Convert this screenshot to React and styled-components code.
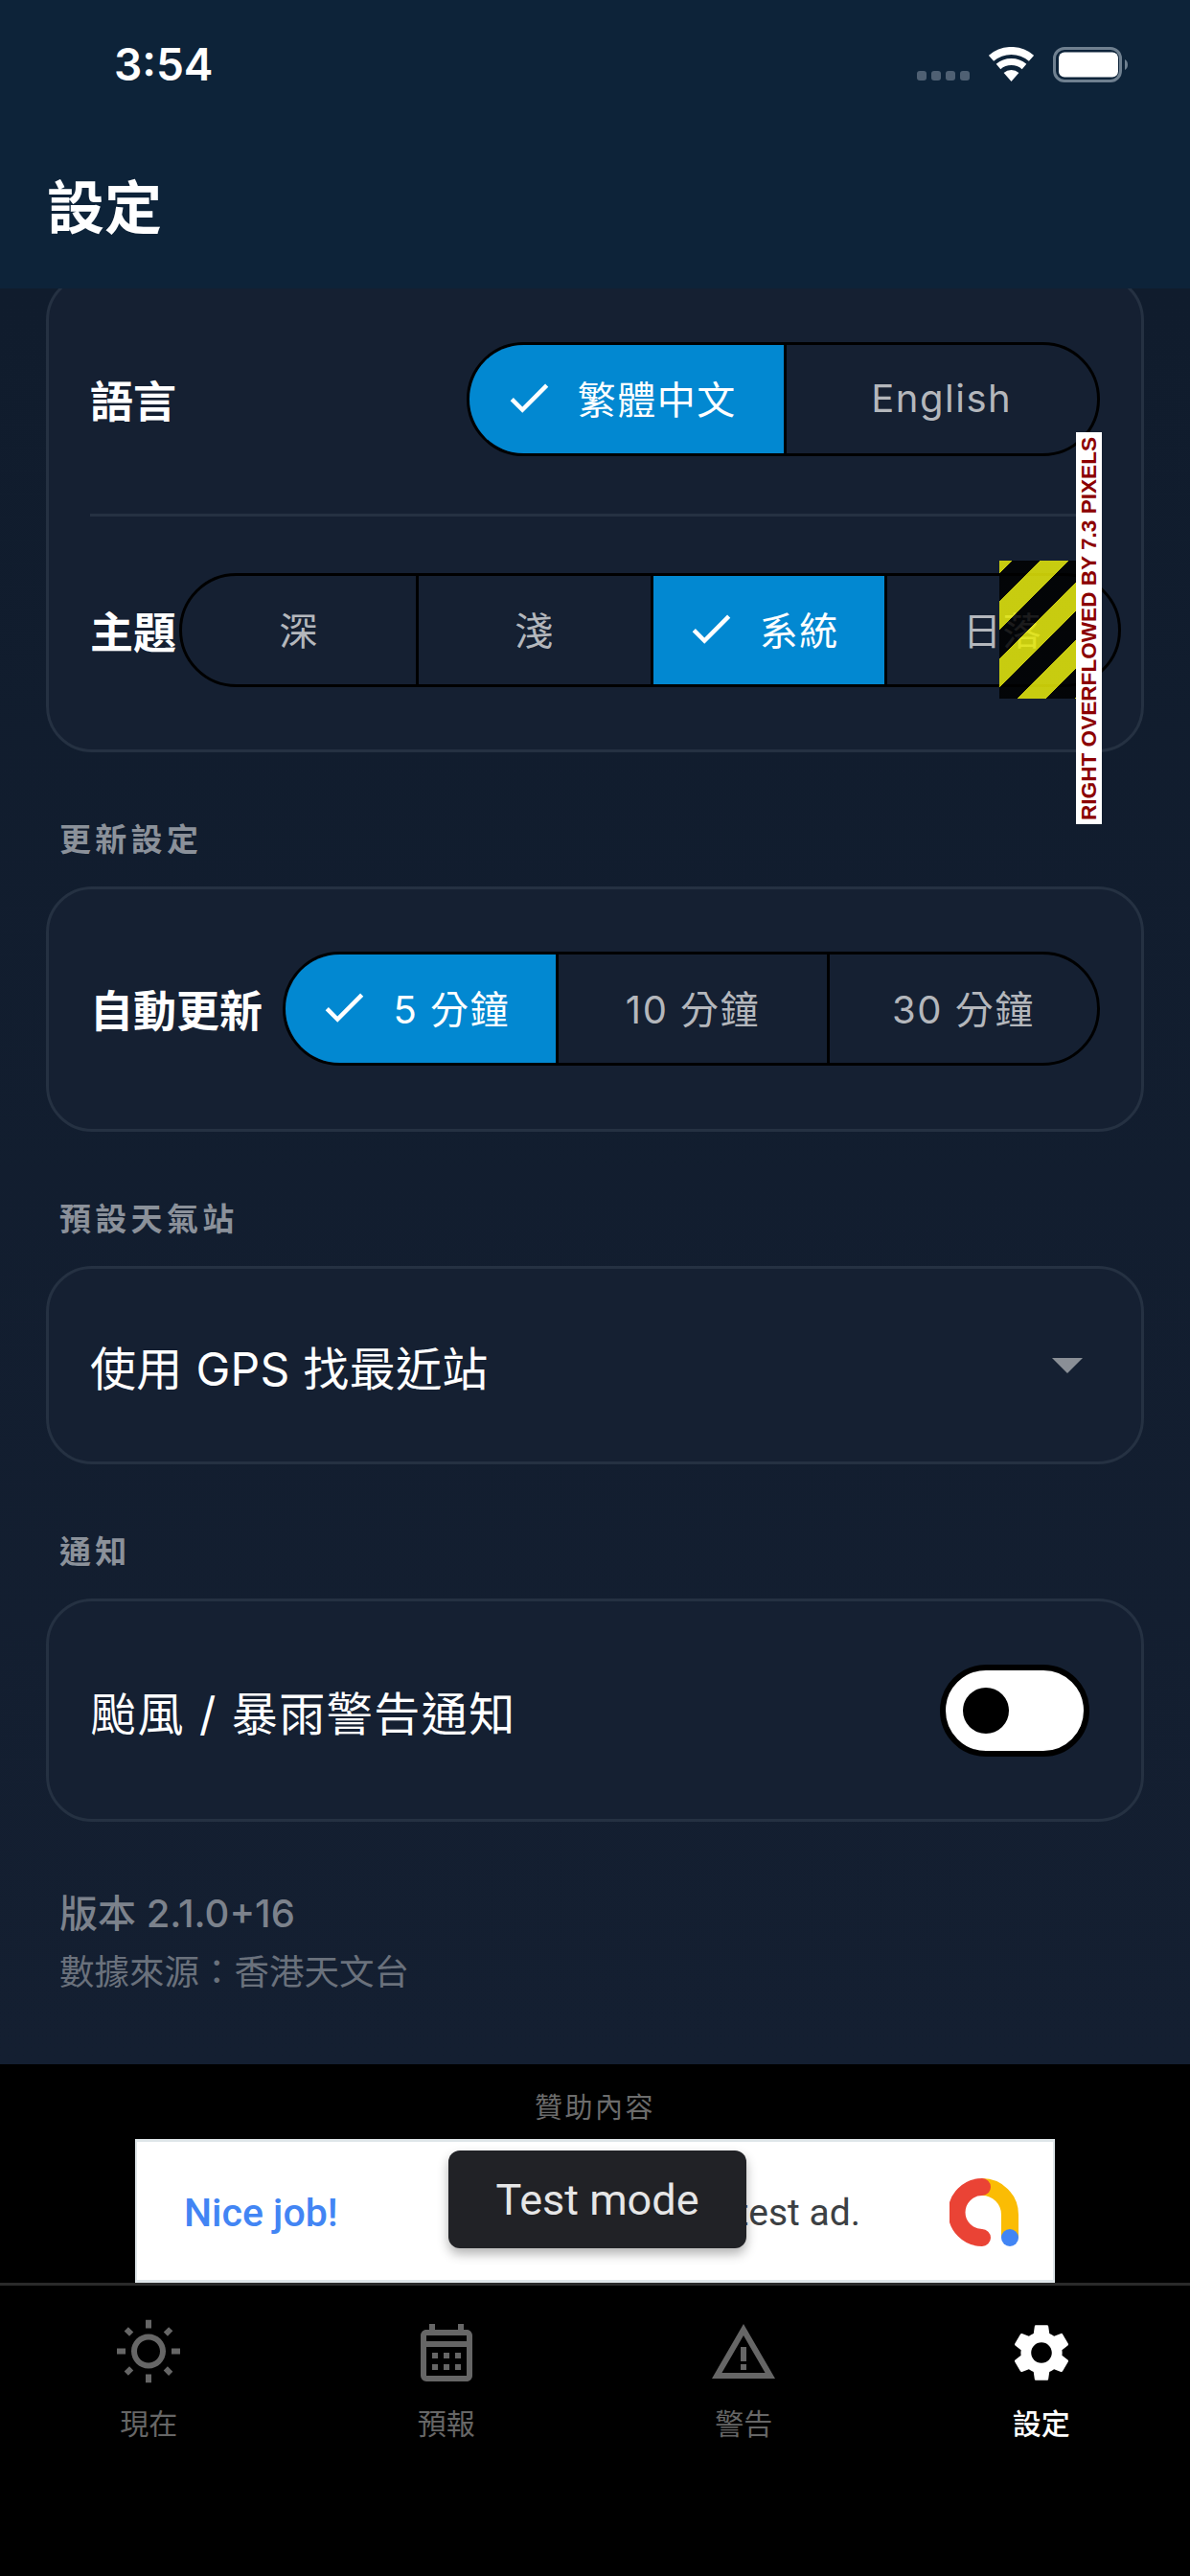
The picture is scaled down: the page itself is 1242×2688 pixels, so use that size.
import React from 'react'
import styled, { createGlobalStyle } from 'styled-components'
import { MdCheck, MdOutlineWbSunny, MdOutlineCalendarMonth, MdWarningAmber, MdSettings } from 'react-icons/md'

const FONT = `Inter, "Noto Sans CJK TC", sans-serif`

const Global = createGlobalStyle`
  html, body { margin: 0; padding: 0; background: #000; }
  * { box-sizing: border-box; }
`

const Screen = styled.div`
  width: 1242px;
  height: 2688px;
  display: flex;
  flex-direction: column;
  overflow: hidden;
  font-family: ${FONT};
  background: #000;
`

const Header = styled.header`
  height: 301px;
  flex-shrink: 0;
  background: #0d2339;
  position: relative;
  z-index: 2;
  color: #fff;
`

const StatusBar = styled.div`
  height: 188px;
  padding: 41px 64px 0 119px;
  display: flex;
  justify-content: space-between;
  align-items: flex-start;
`

const Time = styled.div`
  font-size: 46px;
  line-height: 52px;
  font-weight: 600;
`

const StatusIcons = styled.div`
  display: flex;
  align-items: flex-end;
  gap: 20px;
  padding-top: 8px;
`

const Title = styled.h1`
  margin: -13px 0 0 49px;
  font-size: 60px;
  line-height: 84px;
  font-weight: 700;
`

const Main = styled.main`
  height: 1853px;
  flex-shrink: 0;
  overflow: hidden;
  padding: 0 48px;
  background: linear-gradient(180deg, #101c2d 0%, #141f31 100%);
`

const Card = styled.section`
  background: #152032;
  border: 3px solid #253142;
  border-radius: 48px;
  padding: ${({ $pad }) => $pad || '0 43px'};
  margin-top: ${({ $top }) => $top || 0};
  height: ${({ $height }) => $height};
`

const Row = styled.div`
  position: relative;
  display: flex;
  align-items: center;
  justify-content: space-between;
  height: ${({ $height }) => $height || '119px'};
`

const RowLabel = styled.div`
  flex-shrink: 0;
  padding-right: 3px;
  color: #fff;
  font-size: 45px;
  font-weight: 700;
  white-space: nowrap;
`

const Divider = styled.div`
  height: 3px;
  margin: 60px 0 59px;
  background: #253142;
`

const Segments = styled.div`
  flex-shrink: 0;
  display: grid;
  grid-auto-flow: column;
  grid-auto-columns: 1fr;
  width: ${({ $width }) => $width};
  height: 119px;
  border: 3px solid #000;
  border-radius: 60px;
  overflow: hidden;
`

const Segment = styled.div`
  min-width: 0;
  display: flex;
  align-items: center;
  justify-content: center;
  gap: 24px;
  padding: 0 ${({ $active }) => ($active ? '14px' : '0')} 3px 0;
  font-size: 40px;
  letter-spacing: 1.5px;
  white-space: nowrap;
  color: ${({ $active }) => ($active ? '#fff' : '#b4b7bc')};
  background: ${({ $active }) => ($active ? '#0288d1' : 'transparent')};
  & + & { border-left: 3px solid #000; }
`

const SectionLabel = styled.h2`
  margin: 75px 0 33px 14px;
  font-size: 33px;
  line-height: 32px;
  font-weight: 700;
  letter-spacing: 4.3px;
  color: #8b919a;
`

const SelectText = styled.div`
  color: #fff;
  font-size: 48px;
  letter-spacing: ${({ $spacing }) => $spacing};
`

const Caret = styled.div`
  width: 0;
  height: 0;
  margin-right: 18px;
  border-left: 16px solid transparent;
  border-right: 16px solid transparent;
  border-top: 16px solid #8a8f96;
`

const Toggle = styled.div`
  width: 156px;
  height: 96px;
  margin-right: 11px;
  padding-left: 18px;
  display: flex;
  align-items: center;
  background: #fff;
  border: 6px solid #000;
  border-radius: 48px;
`

const Knob = styled.div`
  width: 48px;
  height: 48px;
  border-radius: 50%;
  background: #000;
`

const Footer = styled.div`
  margin: 74px 0 0 14px;
  color: #7c828c;
`

const Version = styled.div`
  font-size: 40px;
  line-height: 44px;
  font-weight: 500;
`

const Source = styled.div`
  margin-top: 17px;
  font-size: 36.5px;
  line-height: 44px;
  color: #6a717c;
`

const AdArea = styled.div`
  height: 228px;
  flex-shrink: 0;
  background: #000;
  display: flex;
  flex-direction: column;
  align-items: center;
`

const AdLabel = styled.div`
  height: 78px;
  padding-top: 30px;
  font-size: 29px;
  line-height: 32px;
  letter-spacing: 2.5px;
  color: #6c6c6c;
`

const Banner = styled.div`
  position: relative;
  width: 960px;
  height: 150px;
  padding: 0 36px 0 49px;
  display: flex;
  align-items: center;
  background: #fff;
  border: 2px solid #dfe6e9;
  border-top-width: 3px;
  border-bottom-width: 3px;
  font-family: Roboto, sans-serif;
`

const AdHead = styled.div`
  margin-top: 4px;
  color: #4285f4;
  font-size: 41px;
  font-weight: 500;
`

const AdText = styled.div`
  margin: 4px 93px 0 auto;
  color: #3c4043;
  font-size: 39px;
`

const Toast = styled.div`
  position: absolute;
  left: 325px;
  top: 9px;
  width: 311px;
  height: 102px;
  display: flex;
  align-items: center;
  justify-content: center;
  border-radius: 12px;
  background: #212226;
  box-shadow: 0 6px 12px rgba(0, 0, 0, 0.3);
  color: #e6e6e6;
  font-size: 45px;
`

const Nav = styled.nav`
  flex: 1;
  display: grid;
  grid-template-columns: repeat(4, 1fr);
  align-content: start;
  padding-top: 34px;
  background: #000;
  border-top: 3px solid #2a2a2a;
`

const Tab = styled.div`
  display: flex;
  flex-direction: column;
  align-items: center;
  gap: 21px;
  color: ${({ $active }) => ($active ? '#fff' : '#666')};
  font-size: 30px;
  line-height: 34px;
  font-weight: ${({ $active }) => ($active ? 500 : 400)};
`

const Stripes = styled.div`
  position: absolute;
  right: 25px;
  top: -13px;
  width: 80px;
  height: 144px;
  background: repeating-linear-gradient(
    135deg,
    rgba(231, 234, 10, 0.85) 0 9.2px,
    rgba(0, 0, 0, 0.85) 9.2px 30.4px,
    rgba(231, 234, 10, 0.85) 30.4px 42.4px
  );
`

const OverflowLabel = styled.div`
  position: absolute;
  right: -2px;
  top: -147px;
  width: 27px;
  height: 409px;
  display: flex;
  align-items: center;
  justify-content: center;
  background: #fff;
  color: #8b0000;
  font-family: "Liberation Sans", sans-serif;
  font-size: 22.6px;
  font-weight: 700;
  white-space: nowrap;
  writing-mode: vertical-rl;
  transform: rotate(180deg);
`

const Signal = () => (
  <svg width="55" height="12" viewBox="0 0 55 12">
    {[0, 15, 30, 45].map(x => <rect key={x} x={x} y="0" width="10" height="10" rx="3" fill="#4f6073" />)}
  </svg>
)

const Wifi = () => (
  <svg width="47" height="37" viewBox="0 0 47 37">
    <path d="M2.5 11.8 A32 32 0 0 1 44.5 11.8" fill="none" stroke="#fff" strokeWidth="8" />
    <path d="M10 20.5 A20.5 20.5 0 0 1 37 20.5" fill="none" stroke="#fff" strokeWidth="7" />
    <path d="M23.5 36 L15.6 26.9 A12 12 0 0 1 31.4 26.9 Z" fill="#fff" />
  </svg>
)

const Battery = () => (
  <svg width="79" height="37" viewBox="0 0 79 37">
    <rect x="1.5" y="1.5" width="69" height="34" rx="10.5" fill="none" stroke="#6f8090" strokeWidth="3" />
    <rect x="6" y="5.5" width="62" height="26" rx="6" fill="#fff" />
    <path d="M75 13 C79 15 79 22 75 24 Z" fill="#6f8090" />
  </svg>
)

const AdLogo = () => (
  <svg width="72" height="73" viewBox="0 0 72 73">
    <path d="M34 11 A29 29 0 0 1 63 40 V64" fill="none" stroke="#fbbc04" strokeWidth="18" />
    <path d="M34 11 A26.5 26.5 0 0 0 34 64" fill="none" stroke="#ea4335" strokeWidth="18" strokeLinecap="round" />
    <circle cx="63" cy="64" r="9" fill="#4285f4" />
  </svg>
)

const SegmentGroup = ({ options, active, width }) => (
  <Segments $width={width}>
    {options.map(o => (
      <Segment key={o} $active={o === active}>
        {o === active && <MdCheck size={54} />}
        {o}
      </Segment>
    ))}
  </Segments>
)

const tabs = [
  { label: '現在', Icon: MdOutlineWbSunny },
  { label: '預報', Icon: MdOutlineCalendarMonth },
  { label: '警告', Icon: MdWarningAmber },
  { label: '設定', Icon: MdSettings, active: true }
]

export default function App() {
  return (
    <Screen>
      <Global />
      <Header>
        <StatusBar>
          <Time>3:54</Time>
          <StatusIcons>
            <Signal />
            <Wifi />
            <Battery />
          </StatusIcons>
        </StatusBar>
        <Title>設定</Title>
      </Header>

      <Main>
        <Card $top="-15px" $height="499px" $pad="68px 43px 0">
          <Row>
            <RowLabel>語言</RowLabel>
            <SegmentGroup options={['繁體中文', 'English']} active="繁體中文" width="661px" />
          </Row>
          <Divider />
          <Row>
            <RowLabel>主題</RowLabel>
            <SegmentGroup options={['深', '淺', '系統', '日落']} active="系統" width="983px" />
            <Stripes />
            <OverflowLabel>RIGHT OVERFLOWED BY 7.3 PIXELS</OverflowLabel>
          </Row>
        </Card>

        <SectionLabel>更新設定</SectionLabel>
        <Card $height="256px" $pad="65px 43px 0">
          <Row>
            <RowLabel>自動更新</RowLabel>
            <SegmentGroup options={['5 分鐘', '10 分鐘', '30 分鐘']} active="5 分鐘" width="853px" />
          </Row>
        </Card>

        <SectionLabel>預設天氣站</SectionLabel>
        <Card $height="207px">
          <Row $height="201px">
            <SelectText $spacing="0.3px">使用 GPS 找最近站</SelectText>
            <Caret />
          </Row>
        </Card>

        <SectionLabel>通知</SectionLabel>
        <Card $height="233px">
          <Row $height="227px">
            <SelectText $spacing="1.5px">颱風 / 暴雨警告通知</SelectText>
            <Toggle><Knob /></Toggle>
          </Row>
        </Card>

        <Footer>
          <Version>版本 2.1.0+16</Version>
          <Source>數據來源：香港天文台</Source>
        </Footer>
      </Main>

      <AdArea>
        <AdLabel>贊助內容</AdLabel>
        <Banner>
          <AdHead>Nice job!</AdHead>
          <AdText>This is a test ad.</AdText>
          <AdLogo />
          <Toast>Test mode</Toast>
        </Banner>
      </AdArea>

      <Nav>
        {tabs.map(({ label, Icon, active }) => (
          <Tab key={label} $active={active}>
            <Icon size={72} />
            {label}
          </Tab>
        ))}
      </Nav>
    </Screen>
  )
}
